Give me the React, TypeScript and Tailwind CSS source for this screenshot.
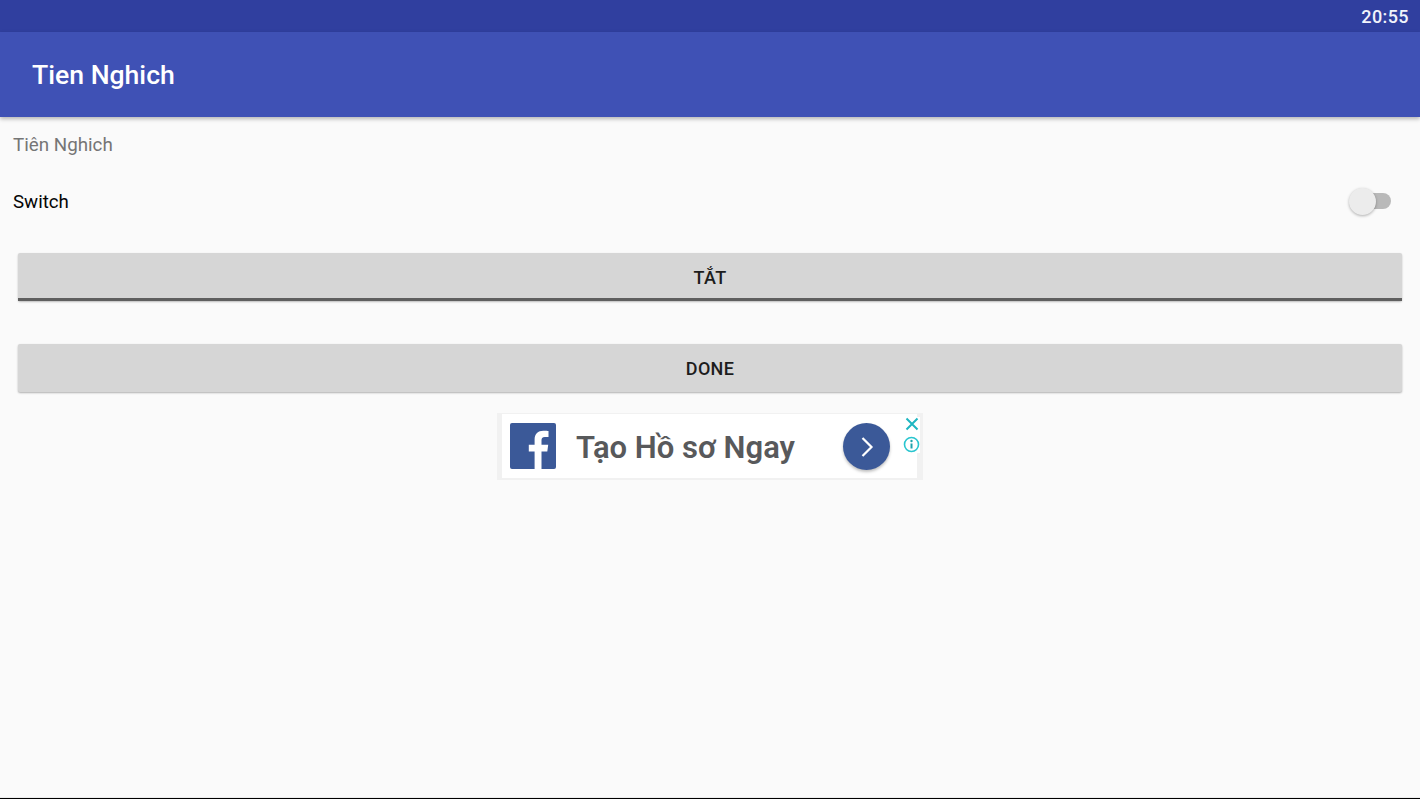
import React from "react";

const roboto = "font-['Roboto',sans-serif]";

const FacebookAd = () => (
  <div className="mt-[21px] w-[426px] h-[67px] mx-auto bg-[#f1f1f1] pl-[5px] pr-[6px] pb-[2px] pt-px">
    <div className="relative h-full bg-white flex items-center">
      <svg className="ml-[8px] w-[46px] h-[46px]" viewBox="0 0 46 46">
        <rect width="46" height="46" rx="2" fill="#3b5998" />
        <path
          d="M31.5 46V28.5h5.8l.9-6.8h-6.7v-4.3c0-2 .6-3.3 3.4-3.3h3.6V8c-.6-.1-2.8-.3-5.2-.3-5.2 0-8.7 3.1-8.7 8.9v5.1h-5.8v6.8h5.8V46z"
          fill="#fff"
        />
      </svg>
      <span className={`ml-[20px] pt-[2px] text-[31px] leading-none font-semibold text-[#58595b] ${roboto}`}>
        Tạo Hồ sơ Ngay
      </span>
      <div className="ml-auto mr-[27px] w-[47px] h-[47px] rounded-full bg-[#3b5998] shadow-[0_2px_3px_rgba(0,0,0,0.25)] flex items-center justify-center">
        <svg className="w-[47px] h-[47px]" viewBox="0 0 47 47" fill="none">
          <path d="M19.5 15l9 9-9 9" stroke="#fff" strokeWidth="2.2" />
        </svg>
      </div>
      <div className="absolute right-[-3px] top-[3px] flex flex-col items-center gap-[5px] bg-white">
        <svg className="w-[14px] h-[14px]" viewBox="0 0 14 14" fill="none">
          <path d="M1.5 1.5l11 11M12.5 1.5l-11 11" stroke="#1fb6c1" strokeWidth="2" />
        </svg>
        <svg className="w-[17px] h-[17px]" viewBox="0 0 17 17" fill="none">
          <circle cx="8.5" cy="8.5" r="7" stroke="#29c5cf" strokeWidth="1.6" />
          <path d="M8.5 7.5v5" stroke="#1fa3ad" strokeWidth="2" />
          <circle cx="8.5" cy="5" r="1.2" fill="#1fa3ad" />
        </svg>
      </div>
    </div>
  </div>
);

const App = () => {
  return (
    <div className={`w-[1420px] h-[799px] overflow-hidden flex flex-col bg-[#fafafa] ${roboto}`}>
      <div className="h-8 shrink-0 bg-[#303f9f] flex items-center justify-end pr-[11px]">
        <span className="text-[18px] font-medium text-[#f1f3fb] tracking-[0.4px]">20:55</span>
      </div>
      <div className="h-[85px] shrink-0 bg-[#3f51b5] flex items-center pl-8 pt-[1px] shadow-[0_2px_4px_rgba(0,0,0,0.28)] z-10">
        <h1 className="text-[26.6px] font-medium text-white">Tien Nghich</h1>
      </div>
      <div className="flex-1 flex flex-col">
        <p className="pl-[13px] mt-[16px] h-6 text-[18.8px] leading-6 text-[#757575]">Tiên Nghich</p>
        <div className="mt-[26px] h-[36px] flex items-center justify-between pl-[13px] pr-[29px]">
          <span className="pt-[2px] text-[18.7px] text-[#050505]">Switch</span>
          <div className="relative w-[42px] h-[16px] flex justify-end">
            <div className="w-[34px] h-[16px] rounded-full bg-[#b9b9b9]" />
            <div className="absolute left-0 -top-[5px] w-[27px] h-[27px] rounded-full bg-[#ececec] shadow-[0_1px_3px_rgba(0,0,0,0.3)]" />
          </div>
        </div>
        <div className="mt-[34px] mx-[18px]">
          <button className="relative w-full h-[48px] rounded-[2px] bg-[#d6d6d6] shadow-[0_1px_2px_rgba(0,0,0,0.25)] text-[18px] font-medium text-[#1d1d1d] tracking-[0.3px]">
            TẮT
            <span className="absolute left-0 right-0 bottom-0 h-[3px] bg-[#5f5f5f]" />
          </button>
        </div>
        <div className="mt-[43px] mx-[18px]">
          <button className="w-full h-[48px] rounded-[2px] bg-[#d6d6d6] shadow-[0_1px_2px_rgba(0,0,0,0.3)] text-[18px] font-medium text-[#1d1d1d] tracking-[0.3px]">
            DONE
          </button>
        </div>
        <FacebookAd />
      </div>
      <div className="h-px shrink-0 bg-[#ececec]" />
      <div className="h-px shrink-0 bg-black" />
    </div>
  );
};

export default App;
